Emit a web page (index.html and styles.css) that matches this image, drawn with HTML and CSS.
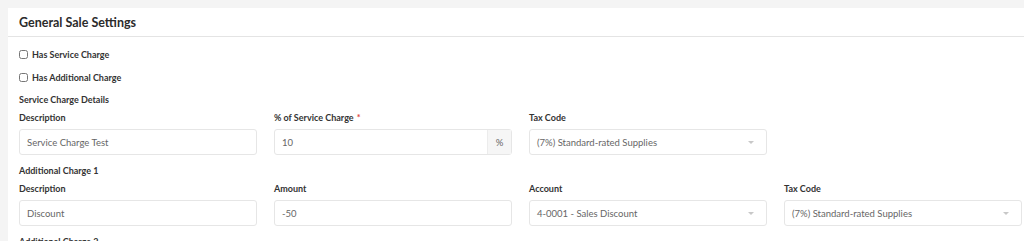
FILE: index.html
```html
<!DOCTYPE html>
<html lang="en">
<head>
    <meta charset="UTF-8">
    <meta name="viewport" content="width=device-width, initial-scale=1.0">
    <title>General Sale Settings</title>
    <link rel="stylesheet" href="styles.css">
</head>
<body>
    <div class="card">
        <div class="card-header">
            <h2>General Sale Settings</h2>
        </div>
        <div class="card-body">
            <label class="check-row"><input type="checkbox"> Has Service Charge</label>
            <label class="check-row"><input type="checkbox"> Has Additional Charge</label>

            <div class="section-title">Service Charge Details</div>
            <div class="field-grid">
                <div class="field">
                    <label>Description</label>
                    <div class="input">Service Charge Test</div>
                </div>
                <div class="field">
                    <label>% of Service Charge <span class="req">*</span></label>
                    <div class="input with-addon">
                        <span class="value">10</span>
                        <span class="addon">%</span>
                    </div>
                </div>
                <div class="field">
                    <label>Tax Code</label>
                    <div class="input select">
                        <span class="value">(7%) Standard-rated Supplies</span>
                        <span class="caret"></span>
                    </div>
                </div>
            </div>

            <div class="section-title">Additional Charge 1</div>
            <div class="field-grid">
                <div class="field">
                    <label>Description</label>
                    <div class="input">Discount</div>
                </div>
                <div class="field">
                    <label>Amount</label>
                    <div class="input">-50</div>
                </div>
                <div class="field">
                    <label>Account</label>
                    <div class="input select">
                        <span class="value">4-0001 - Sales Discount</span>
                        <span class="caret"></span>
                    </div>
                </div>
                <div class="field">
                    <label>Tax Code</label>
                    <div class="input select">
                        <span class="value">(7%) Standard-rated Supplies</span>
                        <span class="caret"></span>
                    </div>
                </div>
            </div>

            <div class="section-title">Additional Charge 2</div>
        </div>
    </div>
</body>
</html>
```

FILE: styles.css
```css
body {
    margin: 0;
    background-color: #f4f4f4;
    font-family: "Lato", "Liberation Sans", sans-serif;
    color: #2b2b2b;
    overflow: hidden;
}
.card {
    margin: 8px 0 0 8px;
    background: white;
    height: 400px;
}
.card-header {
    height: 28px;
    display: flex;
    align-items: center;
    padding-left: 11px;
    border-bottom: 1px solid #e4e4e4;
}
.card-header h2 {
    margin: 0;
    font-size: 12.5px;
    font-weight: 700;
    color: #2b2b2b;
}
.card-body {
    padding: 6px 11px 0;
}
.check-row {
    height: 23px;
    display: flex;
    align-items: center;
    gap: 4px;
    font-size: 9px;
    font-weight: 700;
    color: #333;
}
.check-row input {
    margin: 0;
    width: 9px;
    height: 9px;
}
.section-title {
    height: 20px;
    display: flex;
    align-items: center;
    font-size: 9px;
    font-weight: 700;
    color: #333;
}
.field-grid {
    display: grid;
    grid-template-columns: repeat(4, 238px);
    column-gap: 17px;
    margin-bottom: 5px;
}
.field label {
    display: flex;
    align-items: center;
    height: 16px;
    margin-bottom: 4px;
    font-size: 9px;
    font-weight: 700;
    color: #333;
}
.req {
    color: #e0463e;
    margin-left: 3px;
}
.input {
    box-sizing: border-box;
    height: 26px;
    border: 1px solid #e6e6e6;
    border-radius: 3px;
    display: flex;
    align-items: center;
    padding-left: 7px;
    font-size: 9.5px;
    color: #666;
}
.input .value {
    flex: 1;
}
.with-addon .addon {
    align-self: stretch;
    width: 23px;
    display: flex;
    align-items: center;
    justify-content: center;
    background: #f6f6f6;
    border-left: 1px solid #ececec;
    color: #666;
}
.select {
    padding-right: 12px;
}
.caret {
    width: 0;
    height: 0;
    border-left: 3px solid transparent;
    border-right: 3px solid transparent;
    border-top: 3px solid #c8c8c8;
}
```
